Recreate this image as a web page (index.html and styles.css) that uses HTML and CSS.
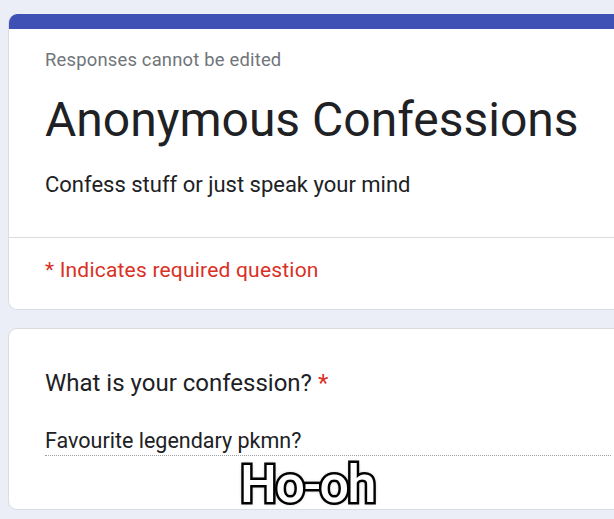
FILE: index.html
```html
<!DOCTYPE html>
<html>
<head>
<meta charset="utf-8">
<link rel="stylesheet" href="styles.css">
</head>
<body>
<div class="page">
  <div class="card head-card">
    <div class="bar"></div>
    <div class="head-main">
      <div class="note">Responses cannot be edited</div>
      <h1 class="title">Anonymous Confessions</h1>
      <div class="desc">Confess stuff or just speak your mind</div>
    </div>
    <div class="divider"></div>
    <div class="required">* Indicates required question</div>
  </div>
  <div class="card q-card">
    <div class="question">What is your confession? <span class="star">*</span></div>
    <div class="answer">Favourite legendary pkmn?</div>
    <div class="caption">Ho-oh</div>
  </div>
</div>
</body>
</html>
```

FILE: styles.css
```css
html, body {
  margin: 0;
  padding: 0;
  background: #ebedf7;
  overflow: hidden;
  font-family: Roboto, "Liberation Sans", sans-serif;
}
.page {
  padding: 14px 0 0 8px;
  width: 640px;
  display: flex;
  flex-direction: column;
  gap: 18px;
}
.card {
  background: #fff;
  border: 1px solid #dadce0;
  border-radius: 9px;
}
.head-card {
  border-top: none;
  overflow: hidden;
}
.bar {
  height: 15px;
  background: #3f51b5;
}
.head-main {
  padding: 19px 36px 0;
  height: 208px;
  box-sizing: border-box;
}
.note {
  font-size: 18.4px;
  color: #70757a;
  line-height: 24px;
  letter-spacing: 0.2px;
}
.title {
  margin: 20px 0 0;
  font-weight: 400;
  font-size: 48px;
  line-height: 56px;
  color: #202124;
}
.desc {
  margin-top: 23px;
  font-size: 22px;
  line-height: 28px;
  color: #202124;
}
.divider {
  height: 1px;
  background: #dadce0;
}
.required {
  padding: 18px 36px 25px;
  font-size: 21px;
  line-height: 28px;
  color: #d93025;
  letter-spacing: 0.2px;
}
.q-card {
  padding: 39px 36px 0;
  height: 182px;
  box-sizing: border-box;
}
.question {
  font-size: 24px;
  line-height: 30px;
  color: #202124;
}
.star {
  color: #d93025;
}
.answer {
  margin-top: 30px;
  font-size: 21.5px;
  line-height: 26px;
  color: #202124;
  padding-bottom: 1px;
  border-bottom: 1px dotted #9aa0a6;
}
.caption {
  margin-left: 195px;
  margin-top: 7px;
  font-family: Roboto, "Liberation Sans", sans-serif;
  font-weight: 500;
  font-size: 52px;
  line-height: 44px;
  letter-spacing: -1.5px;
  color: #fff;
  -webkit-text-stroke: 5px #000;
  paint-order: stroke fill;
  text-shadow: 0 0 4px rgba(0,0,0,0.8);
}
```
